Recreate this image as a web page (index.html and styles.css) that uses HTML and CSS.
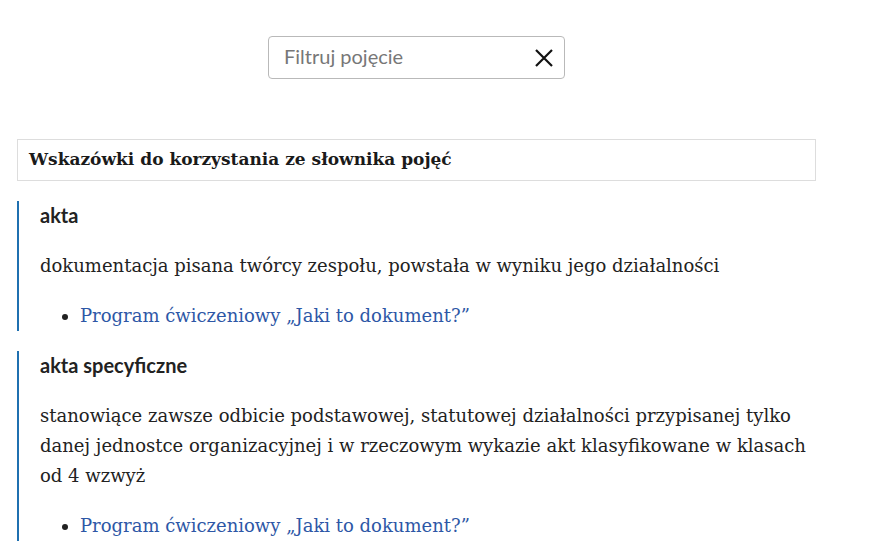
FILE: index.html
```html
<!DOCTYPE html>
<html lang="pl">
<head>
    <meta charset="UTF-8">
    <meta name="viewport" content="width=device-width, initial-scale=1.0">
    <title>Słownik pojęć</title>
    <link rel="stylesheet" href="styles.css">
</head>
<body>
    <div class="glossary">
        <div class="filter">
            <div class="filter-box">
                <input type="text" class="filter-input" placeholder="Filtruj pojęcie">
                <button class="filter-clear" aria-label="Wyczyść">
                    <svg width="20" height="20" viewBox="0 0 20 20">
                        <path d="M2 2 L18 18 M18 2 L2 18" stroke="#111" stroke-width="2.2" fill="none"/>
                    </svg>
                </button>
            </div>
        </div>

        <div class="hints">
            Wskazówki do korzystania ze słownika pojęć
        </div>

        <div class="term">
            <div class="term-name">akta</div>
            <p class="term-desc">dokumentacja pisana twórcy zespołu, powstała w wyniku jego działalności</p>
            <ul class="term-links">
                <li><a href="#">Program ćwiczeniowy „Jaki to dokument?”</a></li>
            </ul>
        </div>

        <div class="term">
            <div class="term-name">akta specyficzne</div>
            <p class="term-desc">stanowiące zawsze odbicie podstawowej, statutowej działalności przypisanej tylko danej jednostce organizacyjnej i w rzeczowym wykazie akt klasyfikowane w klasach od 4 wzwyż</p>
            <ul class="term-links">
                <li><a href="#">Program ćwiczeniowy „Jaki to dokument?”</a></li>
            </ul>
        </div>
    </div>
</body>
</html>
```

FILE: styles.css
```css
body {
    margin: 0;
    padding: 0;
    background-color: #fff;
    color: #222;
    font-family: "DejaVu Serif", serif;
}
.glossary {
    width: 799px;
    margin-left: 17px;
    padding-top: 36px;
}
.filter {
    display: flex;
    justify-content: center;
    margin-bottom: 60px;
}
.filter-box {
    width: 297px;
    height: 43px;
    box-sizing: border-box;
    border: 1px solid #b9b9b9;
    border-radius: 4px;
    display: flex;
    align-items: center;
}
.filter-input {
    flex-grow: 1;
    min-width: 0;
    border: none;
    outline: none;
    background: transparent;
    padding: 0 0 3px 15px;
    font-family: Lato, sans-serif;
    font-size: 20px;
    color: #222;
}
.filter-input::placeholder {
    color: #777;
}
.filter-clear {
    border: none;
    background: none;
    padding: 0;
    margin-right: 10px;
    width: 20px;
    height: 20px;
    display: flex;
    cursor: pointer;
}
.hints {
    border: 1px solid #ddd;
    padding: 9px 11px 10px;
    font-size: 17px;
    font-weight: bold;
    line-height: 21px;
    color: #1a1a1a;
    margin-bottom: 20px;
}
.term {
    border-left: 2px solid #1f70b0;
    padding-left: 21px;
    margin-bottom: 20px;
}
.term-name {
    font-family: Lato, sans-serif;
    font-weight: bold;
    font-size: 20px;
    line-height: 28px;
    margin-bottom: 22px;
    color: #222;
}
.term-desc {
    margin: 0 0 20px;
    font-size: 18px;
    line-height: 30px;
}
.term-links {
    margin: 0;
    padding-left: 40px;
    font-size: 18px;
    line-height: 30px;
}
.term-links a {
    color: #2d57a6;
    text-decoration: none;
}
```
